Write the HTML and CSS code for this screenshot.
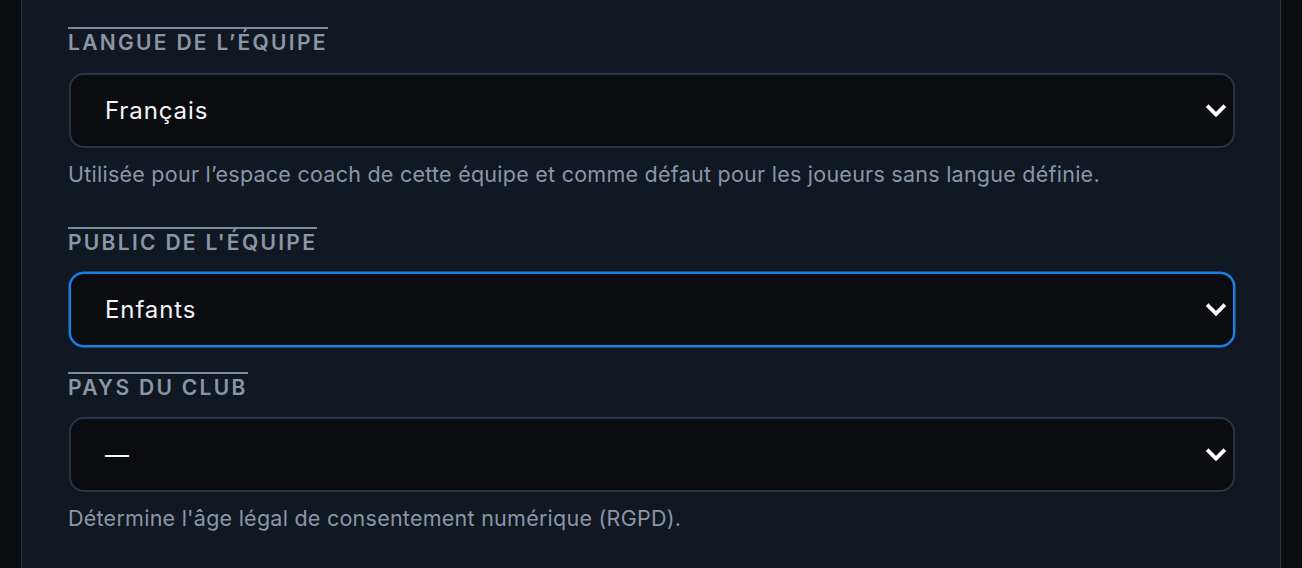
FILE: index.html
```html
<!DOCTYPE html>
<html lang="fr">
<head>
<meta charset="utf-8">
<title>Paramètres de l'équipe</title>
<link rel="stylesheet" href="styles.css">
</head>
<body>
<div class="page">
  <section class="panel">
    <div class="field">
      <label class="label">Langue de l’équipe</label>
      <div class="select">
        <span class="value">Français</span>
        <svg class="chev" width="20" height="14" viewBox="0 0 20 14"><path d="M2.5 3 L10 10.5 L17.5 3" fill="none" stroke="#ffffff" stroke-width="3.8" stroke-linecap="square"/></svg>
      </div>
      <p class="help">Utilisée pour l’espace coach de cette équipe et comme défaut pour les joueurs sans langue définie.</p>
    </div>
    <div class="field">
      <label class="label">Public de l'équipe</label>
      <div class="select focused">
        <span class="value">Enfants</span>
        <svg class="chev" width="20" height="14" viewBox="0 0 20 14"><path d="M2.5 3 L10 10.5 L17.5 3" fill="none" stroke="#ffffff" stroke-width="3.8" stroke-linecap="square"/></svg>
      </div>
    </div>
    <div class="field">
      <label class="label">Pays du club</label>
      <div class="select select-last">
        <span class="value">—</span>
        <svg class="chev" width="20" height="14" viewBox="0 0 20 14"><path d="M2.5 3 L10 10.5 L17.5 3" fill="none" stroke="#ffffff" stroke-width="3.8" stroke-linecap="square"/></svg>
      </div>
      <p class="help">Détermine l'âge légal de consentement numérique (RGPD).</p>
    </div>
  </section>
</div>
</body>
</html>
```
FILE: styles.css
```css
* { box-sizing: border-box; }
html, body { margin: 0; padding: 0; }
body {
  background: #0b0c0f;
  font-family: Inter, "Noto Sans", sans-serif;
  height: 568px;
  overflow: hidden;
}
.page {
  padding-left: 21px;
  width: 1281px;
  height: 568px;
}
.panel {
  height: 100%;
  background: #121821;
  border-left: 1px solid #2b3647;
  border-right: 1px solid #2b3647;
  padding: 27px 45px 0 46px;
  display: flex;
  flex-direction: column;
  gap: 25px;
}
.field {
  display: flex;
  flex-direction: column;
  align-items: flex-start;
}
.label {
  display: inline-block;
  border-top: 2px solid #7f8b9d;
  padding-top: 2px;
  color: #8a96a8;
  font-size: 21px;
  line-height: 24px;
  font-weight: 600;
  text-transform: uppercase;
  letter-spacing: 2.3px;
}
.select {
  margin-top: 18px;
  margin-left: 1px;
  align-self: stretch;
  height: 75px;
  background: #0b0c10;
  border: 2px solid #2a3547;
  border-radius: 15px;
  display: flex;
  align-items: center;
  justify-content: space-between;
  padding: 0 7px 0 34px;
}
.select.focused {
  margin-top: 17px;
  border-color: #1a7ee8;
  box-shadow: 0 0 0 0.5px #1a7ee8;
}
.select.select-last { margin-top: 17px; }
.value {
  color: #f4f5f7;
  font-size: 24px;
  letter-spacing: 0.9px;
}
.chev { display: block; }
.help {
  margin: 13px 0 15px;
  color: #8a96a8;
  font-size: 21.5px;
  line-height: 26px;
  letter-spacing: 0.25px;
}
```
